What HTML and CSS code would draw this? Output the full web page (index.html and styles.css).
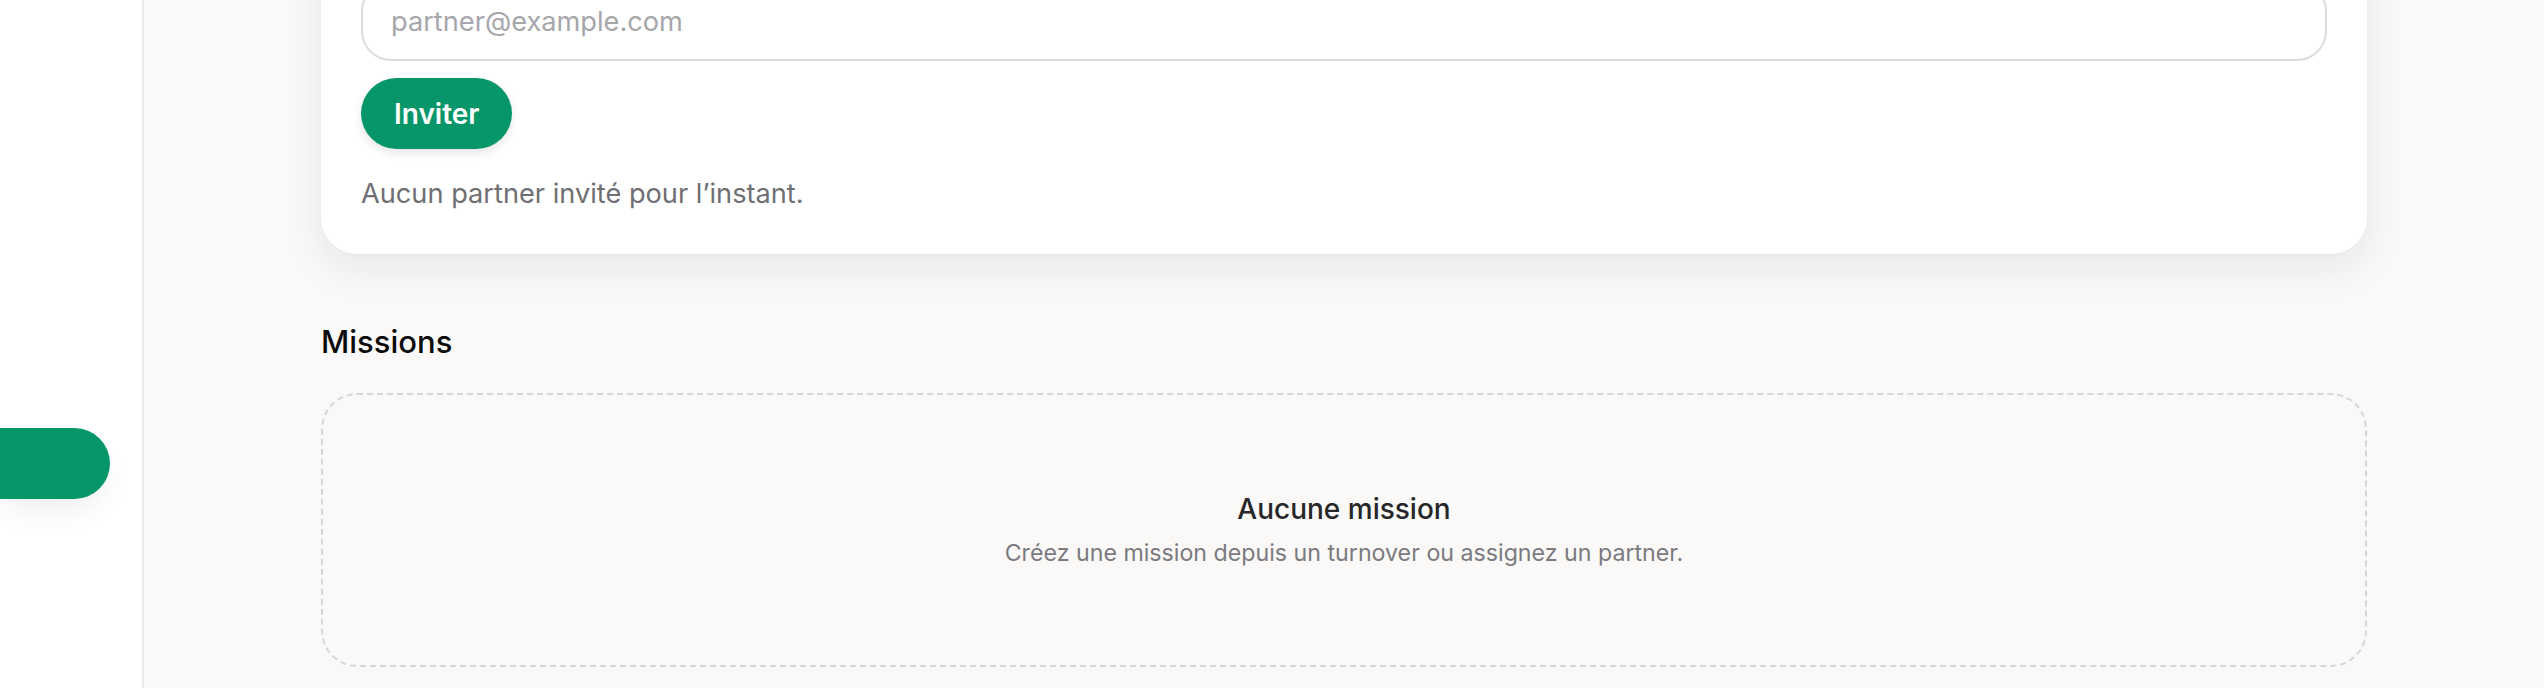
FILE: index.html
```html
<!DOCTYPE html>
<html lang="fr">
<head>
    <meta charset="UTF-8">
    <meta name="viewport" content="width=device-width, initial-scale=1.0">
    <title>Partners et missions</title>
    <link rel="stylesheet" href="styles.css">
</head>
<body>
    <div class="layout">
        <aside class="sidebar">
            <div class="nav-item active"></div>
        </aside>
        <main class="content">
            <section class="card">
                <form class="invite-form" autocomplete="off" onsubmit="return false">
                    <input type="email" name="mail" class="txtbox" placeholder="partner@example.com">
                    <button type="submit" class="btn">Inviter</button>
                </form>
                <p class="muted">Aucun partner invité pour l’instant.</p>
            </section>
            <section class="missions">
                <h2>Missions</h2>
                <div class="empty">
                    <p class="empty-title">Aucune mission</p>
                    <p class="empty-text">Créez une mission depuis un turnover ou assignez un partner.</p>
                </div>
            </section>
        </main>
    </div>
</body>
</html>
```
FILE: styles.css
```css
*{
    box-sizing: border-box;
    font-family: Inter, "Noto Sans", sans-serif;
}
html, body{
    height: 100%;
}
body{
    margin: 0;
    overflow: hidden;
    background-color: #faf9f7;
}

.layout{
    display: flex;
    height: 100%;
}

/* sidebar */
.sidebar{
    width: 144px;
    flex-shrink: 0;
    background-color: #ffffff;
    border-right: 2px solid #ebebe9;
    padding-top: 428px;
}
.nav-item{
    width: 110px;
    height: 71px;
    border-radius: 0 36px 36px 0;
}
.nav-item.active{
    background-color: #079669;
    box-shadow: 0 16px 30px -6px rgba(0, 0, 0, 0.07);
}

/* main column (page is scrolled down a bit) */
.content{
    flex: 1;
    padding: 0 177px;
}

.card{
    margin-top: -59px;
    background-color: #ffffff;
    border-radius: 36px;
    padding: 40px 40px 41px;
    box-shadow: 0 14px 40px rgba(30, 30, 20, 0.08), 0 1px 3px rgba(0, 0, 0, 0.03);
}

.invite-form{
    display: flex;
    flex-direction: column;
    align-items: flex-start;
    gap: 17px;
}
.txtbox{
    width: 100%;
    height: 80px;
    border: 2px solid #dcdcdc;
    border-radius: 30px;
    padding: 0 28px;
    font-size: 27.2px;
    color: #222;
    background-color: #fff;
    outline: none;
}
.txtbox::placeholder{
    color: #a6a6ab;
}
.btn{
    height: 71px;
    padding: 0 33px;
    border: none;
    border-radius: 36px;
    background-color: #079669;
    color: #ffffff;
    font-size: 28px;
    font-weight: 600;
    box-shadow: 0 4px 10px rgba(0, 0, 0, 0.1);
    cursor: pointer;
}

.muted{
    margin: 26px 0 0;
    font-size: 27.2px;
    line-height: 38px;
    color: #6f6f73;
}

/* missions */
.missions{
    margin-top: 66px;
}
.missions h2{
    margin: 0 0 30px;
    font-size: 31px;
    line-height: 43px;
    font-weight: 500;
    color: #0b0b0b;
}
.empty{
    height: 274px;
    border: 2px dashed #d6d6d6;
    border-radius: 36px;
    display: flex;
    flex-direction: column;
    align-items: center;
    justify-content: center;
    gap: 10px;
    text-align: center;
}
.empty-title{
    margin: 0;
    font-size: 28px;
    line-height: 36px;
    font-weight: 500;
    color: #27272a;
}
.empty-text{
    margin: 0;
    font-size: 23.2px;
    line-height: 32px;
    color: #7a7a80;
}
```
